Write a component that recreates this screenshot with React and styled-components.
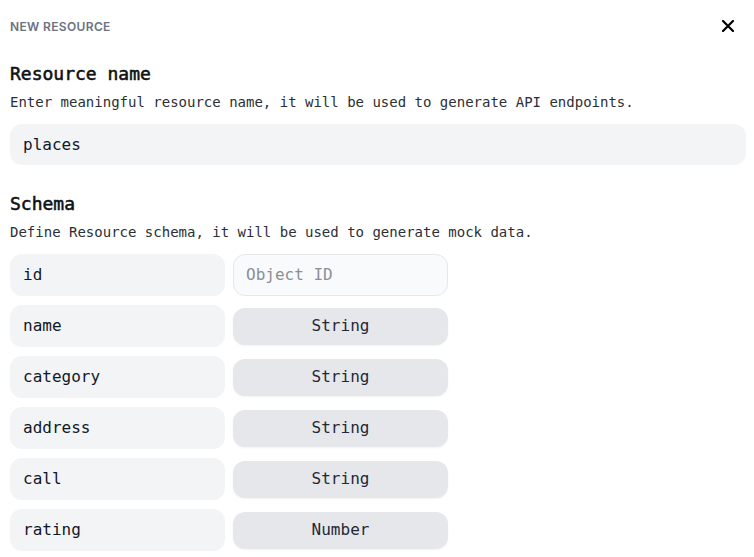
import React, { useState } from 'react'
import styled, { createGlobalStyle } from 'styled-components'

const GlobalStyle = createGlobalStyle`
  body {
    margin: 0;
    background: #ffffff;
    font-family: "DejaVu Sans Mono", "Liberation Mono", monospace;
    color: #111827;
  }
`;

const Panel = styled.div`
  padding: 0 8px 0 10px;
`;

const Header = styled.div`
  display: flex;
  align-items: center;
  justify-content: space-between;
  height: 52px;
`;

const Kicker = styled.span`
  padding-top: 1px;
  font-family: Inter, "Noto Sans", sans-serif;
  font-size: 12px;
  font-weight: 600;
  color: #6b7280;
  letter-spacing: 0.35px;
`;

const Close = styled.button`
  display: flex;
  align-items: center;
  justify-content: center;
  width: 24px;
  height: 24px;
  margin-right: 6px;
  padding: 0;
  border: none;
  background: none;
  cursor: pointer;
`;

const Title = styled.h2`
  margin: ${(p) => p.$top}px 0 0;
  font-size: 18px;
  line-height: 24px;
  font-weight: 400;
  -webkit-text-stroke: 0.55px #111111;
  color: #111111;
`;

const Hint = styled.p`
  margin: 6px 0 12px;
  font-size: 14px;
  line-height: 20px;
  color: #2b2f36;
`;

const NameInput = styled.input`
  display: block;
  box-sizing: border-box;
  width: 100%;
  height: 41px;
  padding: 0 13px;
  border: none;
  border-radius: 12px;
  background: #f3f4f6;
  font-family: inherit;
  font-size: 16px;
  color: #111827;
  outline: none;
`;

const Rows = styled.div`
  display: flex;
  flex-direction: column;
  gap: 9px;
`;

const Row = styled.div`
  display: grid;
  grid-template-columns: 215px 215px;
  column-gap: 8px;
  align-items: center;
`;

const Field = styled.div`
  box-sizing: border-box;
  height: 42px;
  padding: 0 13px 1px;
  display: flex;
  align-items: center;
  border-radius: 12px;
  background: #f3f4f6;
  font-size: 16px;
  color: #111827;
`;

const IdInput = styled.input`
  box-sizing: border-box;
  width: 100%;
  height: 42px;
  padding: 0 12px 1px;
  border: 1px solid #e5e7eb;
  border-radius: 12px;
  background: #f9fafb;
  font-family: inherit;
  font-size: 16px;
  outline: none;

  &::placeholder {
    color: #8a8f98;
  }
`;

const TypeButton = styled.button`
  display: flex;
  align-items: center;
  justify-content: center;
  height: 37px;
  padding: 0 0 2px;
  border: none;
  border-radius: 12px;
  background: #e5e7eb;
  box-shadow: 0 1px 2px rgba(0, 0, 0, 0.05);
  font-family: inherit;
  font-size: 16px;
  color: #1f2937;
  cursor: pointer;
`;

const fields = [
  { name: 'name', type: 'String' },
  { name: 'category', type: 'String' },
  { name: 'address', type: 'String' },
  { name: 'call', type: 'String' },
  { name: 'rating', type: 'Number' },
];

const App = () => {
  const [resource, setResource] = useState('places');

  return (
    <Panel>
      <GlobalStyle />
      <Header>
        <Kicker>NEW RESOURCE</Kicker>
        <Close aria-label="Close">
          <svg width="12" height="12" viewBox="0 0 12 12">
            <path d="M1 1L11 11M11 1L1 11" stroke="#000" strokeWidth="2.2" strokeLinecap="square" />
          </svg>
        </Close>
      </Header>

      <Title $top={10}>Resource name</Title>
      <Hint>Enter meaningful resource name, it will be used to generate API endpoints.</Hint>
      <NameInput value={resource} onChange={(e) => setResource(e.target.value)} />

      <Title $top={27}>Schema</Title>
      <Hint>Define Resource schema, it will be used to generate mock data.</Hint>
      <Rows>
        <Row>
          <Field>id</Field>
          <IdInput placeholder="Object ID" disabled />
        </Row>
        {fields.map((f) => (
          <Row key={f.name}>
            <Field>{f.name}</Field>
            <TypeButton>{f.type}</TypeButton>
          </Row>
        ))}
      </Rows>
    </Panel>
  )
}

export default App
